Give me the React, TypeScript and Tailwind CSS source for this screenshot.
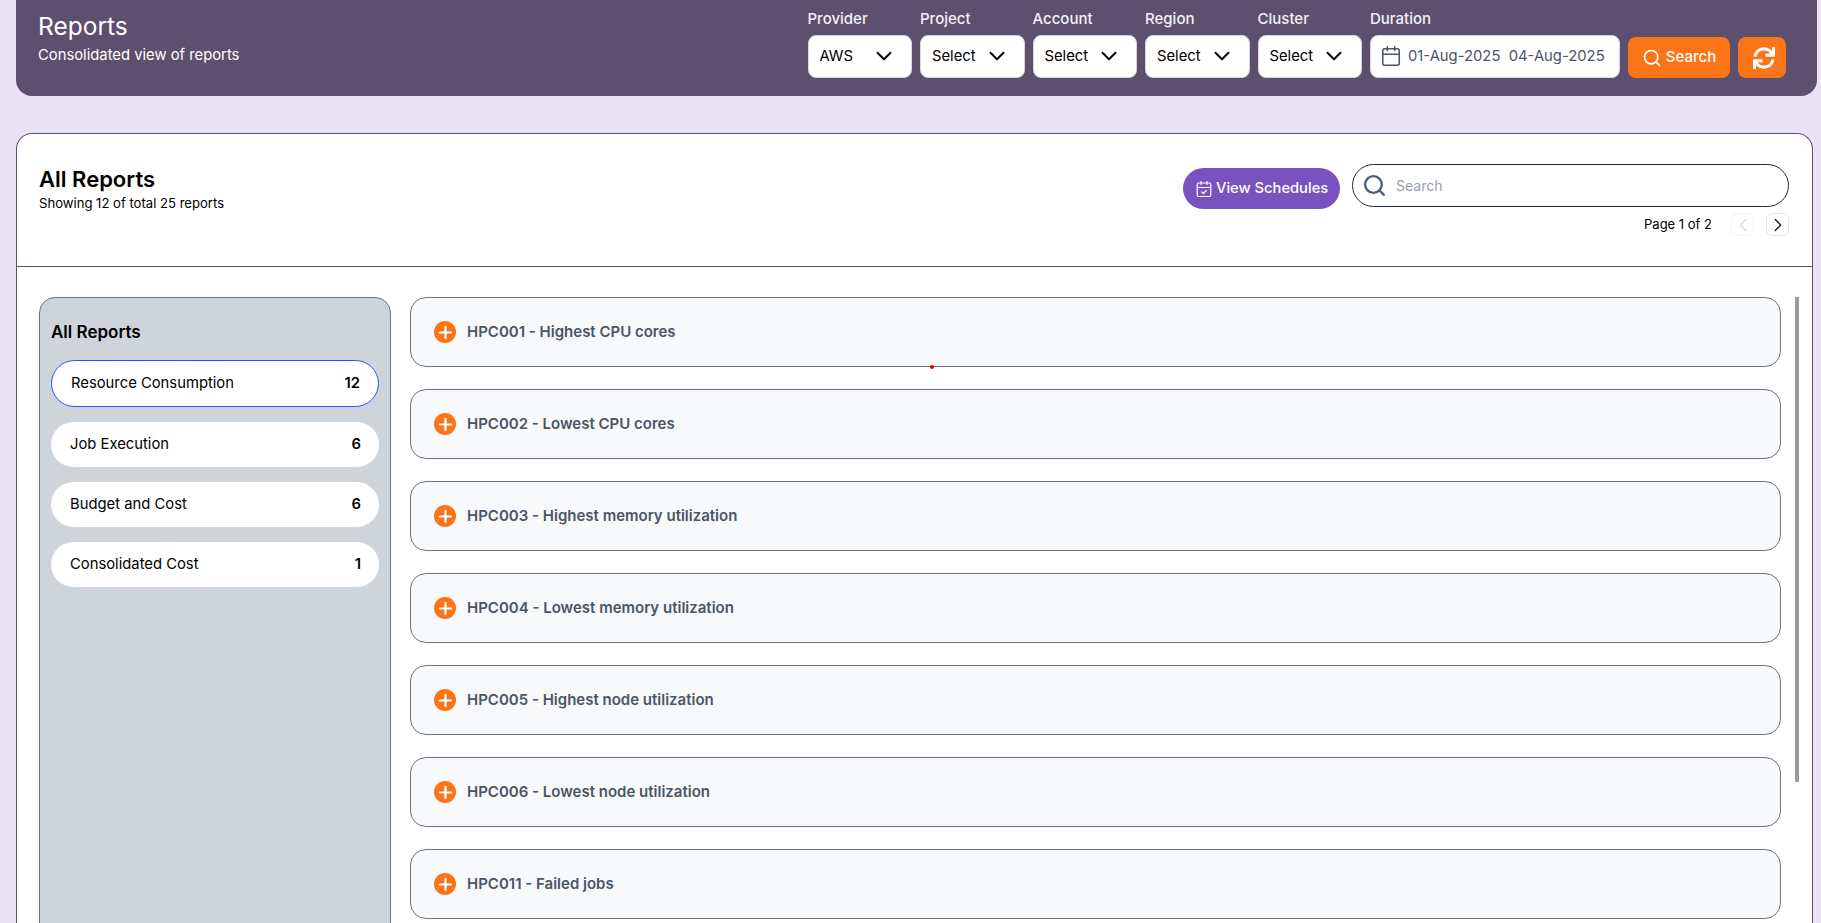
import { Calendar, CalendarCheck, ChevronDown, ChevronLeft, ChevronRight, Plus, Search } from "lucide-react";
import { FaSync } from "react-icons/fa";

const filters = [
  { label: "Provider", value: "AWS" },
  { label: "Project", value: "Select" },
  { label: "Account", value: "Select" },
  { label: "Region", value: "Select" },
  { label: "Cluster", value: "Select" },
];

const categories = [
  { name: "Resource Consumption", count: 12 },
  { name: "Job Execution", count: 6 },
  { name: "Budget and Cost", count: 6 },
  { name: "Consolidated Cost", count: 1 },
];

const reports = [
  "HPC001 - Highest CPU cores",
  "HPC002 - Lowest CPU cores",
  "HPC003 - Highest memory utilization",
  "HPC004 - Lowest memory utilization",
  "HPC005 - Highest node utilization",
  "HPC006 - Lowest node utilization",
  "HPC011 - Failed jobs",
];

function FilterSelect({ label, value }: { label: string; value: string }) {
  return (
    <div className="w-[104.5px]">
      <p className="text-[15px] font-medium leading-[19px] text-[#f4f1f7]">{label}</p>
      <div className="mt-[7px] flex h-[43px] items-center justify-between rounded-lg border border-gray-300 bg-white pb-px pl-[11px] pr-[14px] text-[14.8px] text-black">
        {value}
        <ChevronDown className="size-[26px] shrink-0" strokeWidth={1.8} />
      </div>
    </div>
  );
}

export default function App() {
  return (
    <div className="flex h-[923px] flex-col overflow-hidden bg-[#e9e2f5] font-['Inter',sans-serif]">
      <header className="ml-4 mr-1 flex h-[96px] shrink-0 items-start justify-between rounded-b-2xl bg-[#5d4f6e] pl-[22px] pr-[31px]">
        <div className="pt-[10px] text-white">
          <h1 className="text-[24.5px] leading-[32px]">Reports</h1>
          <p className="mt-[3px] text-[14.8px] leading-5">Consolidated view of reports</p>
        </div>
        <div className="flex items-start gap-2 pt-[9px]">
          {filters.map((f) => (
            <FilterSelect key={f.label} label={f.label} value={f.value} />
          ))}
          <div className="w-[250px]">
            <p className="text-[15px] font-medium leading-[19px] text-[#f4f1f7]">Duration</p>
            <div className="mt-[7px] flex h-[43px] items-center gap-[6px] rounded-lg border border-gray-300 bg-white pb-px pl-[9px] text-[14.8px] text-[#4b5563]">
              <Calendar className="size-[22px] shrink-0" strokeWidth={1.7} />
              <span>01-Aug-2025&nbsp; 04-Aug-2025</span>
            </div>
          </div>
          <button className="mt-[28px] flex h-[41px] w-[102px] items-center justify-center gap-[4px] rounded-lg bg-[#fb7418] text-[15px] font-medium text-white">
            <Search className="size-5" strokeWidth={2} />
            Search
          </button>
          <button className="mt-[28px] flex h-[41px] w-[48px] items-center justify-center rounded-lg bg-[#fb7418] pl-[3px] text-white">
            <FaSync className="size-[22px]" />
          </button>
        </div>
      </header>

      <main className="ml-4 mr-2 mt-[37px] min-h-0 flex-1 rounded-t-2xl border border-b-0 border-[#5d4f6e] bg-white">
        <div className="flex h-[133px] items-start justify-between border-b border-[#5d4f6e] pl-[22px] pr-[23px]">
          <div className="pt-[30px] text-black">
            <h2 className="text-[22px] font-semibold leading-[30px]">All Reports</h2>
            <p className="text-[13.1px] leading-[18px]">Showing 12 of total 25 reports</p>
          </div>
          <div className="flex items-start gap-3 pt-[30px]">
            <button className="mt-[4px] flex h-[41px] w-[157px] items-center gap-[3px] rounded-full bg-[#7952bf] pl-3 text-[14.7px] font-medium text-white">
              <CalendarCheck className="size-[18px] shrink-0" strokeWidth={1.6} />
              View Schedules
            </button>
            <div className="w-[437px]">
              <div className="flex h-[43px] items-center gap-[9px] rounded-full border border-[#1f2937] pl-[9px] text-sm text-gray-400">
                <Search className="size-[25px] shrink-0 text-[#4b5f73]" strokeWidth={2.2} />
                Search
              </div>
              <div className="mt-[6px] flex items-center justify-end text-[13px] text-black">
                <span>Page 1 of 2</span>
                <span className="ml-[19px] flex h-[23px] w-[23px] items-center justify-center rounded-md border border-gray-100 text-gray-300">
                  <ChevronLeft className="size-[22px] shrink-0" strokeWidth={1.4} />
                </span>
                <span className="ml-[12px] flex h-[23px] w-[23px] items-center justify-center rounded-md border border-gray-200 text-[#1e1433]">
                  <ChevronRight className="size-[22px] shrink-0" strokeWidth={1.4} />
                </span>
              </div>
            </div>
          </div>
        </div>

        <div className="flex h-[700px] gap-[19px] pl-[22px] pt-[30px]">
          <aside className="h-[800px] w-[352px] shrink-0 rounded-t-2xl border border-gray-500 bg-[#cfd4db] px-[11px]">
            <h3 className="mt-[24px] text-[17px] font-semibold leading-5 text-black">All Reports</h3>
            <ul className="mt-[18px] flex flex-col gap-[15px]">
              {categories.map((c, i) => (
                <li
                  key={c.name}
                  className={
                    i === 0
                      ? "flex h-[47px] items-center justify-between rounded-full border border-blue-600 bg-white pb-px pl-[19px] pr-[18px] text-[14.8px] text-black"
                      : "flex h-[45px] items-center justify-between rounded-full bg-white pb-px pl-[19px] pr-[18px] text-[14.8px] text-black"
                  }
                >
                  <span>{c.name}</span>
                  <span className="font-semibold">{c.count}</span>
                </li>
              ))}
            </ul>
          </aside>

          <div className="relative min-w-0 flex-1">
            <div className="flex w-[1371px] flex-col gap-[22px]">
              {reports.map((r) => (
                <div key={r} className="flex h-[70px] shrink-0 items-center gap-[11px] rounded-2xl border border-gray-500 bg-[#f8f9fb] pl-[23px]">
                  <span className="flex size-[22px] shrink-0 items-center justify-center rounded-full bg-[#fb7418] text-white">
                    <Plus className="size-[19px]" strokeWidth={2.8} />
                  </span>
                  <span className="text-[15px] font-semibold text-[#4b5563]">{r}</span>
                </div>
              ))}
            </div>
            {/* stray marker sitting on the first card's border */}
            <span className="absolute left-[520px] top-[68px] size-1 rounded-full bg-red-600" />
            <div className="absolute left-[1385px] top-0 h-[485px] w-1 bg-[#9c9c9c]" />
          </div>
        </div>
      </main>
    </div>
  );
}
